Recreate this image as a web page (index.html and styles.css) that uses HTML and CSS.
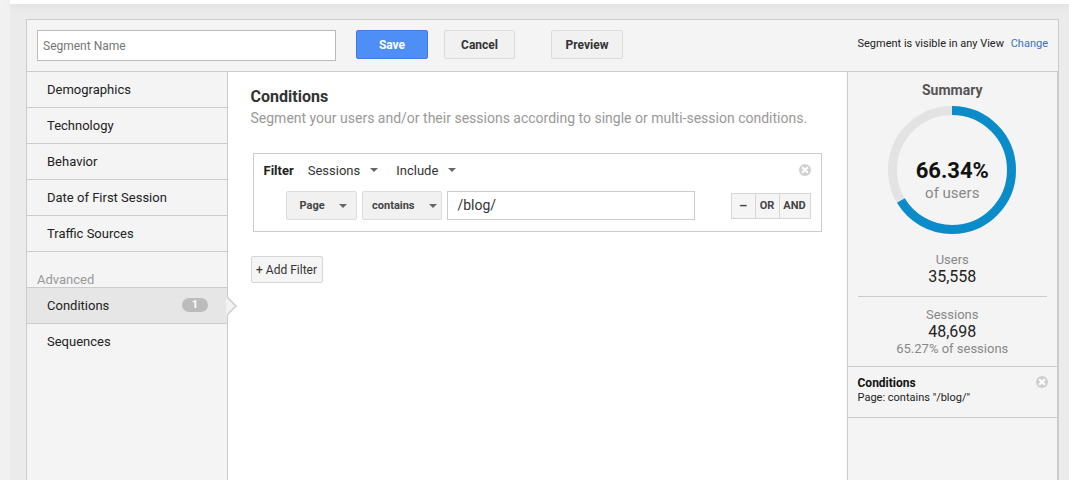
FILE: index.html
```html
<!DOCTYPE html>
<html>
<head>
<meta charset="utf-8">
<link rel="stylesheet" href="styles.css">
</head>
<body>
<div class="strip"></div>
<div class="stage">
  <div class="topbar"></div>
  <div class="panel">
    <div class="header">
      <input class="name" type="text" placeholder="Segment Name">
      <button class="btn save">Save</button>
      <button class="btn cancel">Cancel</button>
      <button class="btn preview">Preview</button>
      <div class="visible">Segment is visible in any View <a class="change">Change</a></div>
    </div>
    <div class="body">
      <nav class="nav">
        <div class="item">Demographics</div>
        <div class="item">Technology</div>
        <div class="item">Behavior</div>
        <div class="item">Date of First Session</div>
        <div class="item">Traffic Sources</div>
        <div class="adv">Advanced</div>
        <div class="item sel top">Conditions <span class="badge">1</span><span class="arrow"></span></div>
        <div class="item last">Sequences</div>
      </nav>
      <main class="content">
        <h1 class="title">Conditions</h1>
        <p class="sub">Segment your users and/or their sessions according to single or multi-session conditions.</p>
        <div class="filter">
          <div class="frow1">
            <span class="flabel">Filter</span>
            <span class="dd">Sessions <span class="caret"></span></span>
            <span class="dd">Include <span class="caret"></span></span>
            <span class="x fx"></span>
          </div>
          <div class="frow2">
            <span class="sbtn page">Page <span class="caret"></span></span>
            <span class="sbtn contains">contains <span class="caret"></span></span>
            <div class="val">/blog/</div>
            <div class="ops"><span class="op minus">&#8211;</span><span class="op">OR</span><span class="op">AND</span></div>
          </div>
        </div>
        <button class="addf">+ Add Filter</button>
      </main>
      <aside class="summary">
        <div class="stitle">Summary</div>
        <div class="donut">
          <svg width="130" height="130" viewBox="0 0 130 130">
            <circle cx="65" cy="65" r="59.5" fill="none" stroke="#e3e3e3" stroke-width="9"/>
            <circle cx="65" cy="65" r="59.5" fill="none" stroke="#0b8cca" stroke-width="9" stroke-dasharray="248 400" transform="rotate(-90 65 65)"/>
          </svg>
          <div class="dtext"><div class="pct">66.34%</div><div class="of">of users</div></div>
        </div>
        <div class="stat"><div class="lab">Users</div><div class="num">35,558</div></div>
        <div class="stat sess"><div class="lab">Sessions</div><div class="num">48,698</div><div class="lab">65.27% of sessions</div></div>
        <div class="cond">
          <div class="ctitle">Conditions</div>
          <div class="ctext">Page: contains "/blog/"</div>
          <span class="x cx"></span>
        </div>
      </aside>
    </div>
  </div>
</div>
</body>
</html>
```
FILE: styles.css
```css
* { box-sizing: border-box; }
html, body { margin: 0; height: 100%; overflow: hidden; }
body {
  display: flex;
  background: #f1f1f1;
  font-family: Roboto, "Liberation Sans", Arial, sans-serif;
  color: #222;
}
.strip { width: 10px; flex: none; }
.stage {
  flex: 1;
  background: #ebebeb;
  display: flex;
  flex-direction: column;
}
.topbar {
  height: 4px;
  background: #fff;
  box-shadow: 0 2px 8px rgba(0,0,0,0.08);
  margin-bottom: 15px;
}
.panel {
  margin-left: 16px;
  width: 1033px;
  flex: 1;
  border: 1px solid #ccc;
  border-bottom: 0;
  background: #f4f4f4;
  display: flex;
  flex-direction: column;
}
.header {
  height: 52px;
  border-bottom: 1px solid #ccc;
  display: flex;
  align-items: flex-start;
  padding: 10px 10px 0 10px;
}
.name {
  width: 299px;
  height: 31px;
  border: 1px solid #bbb;
  background: #fff;
  font: 12px Roboto, "Liberation Sans", sans-serif;
  padding: 0 5px;
  outline: none;
}
.name::placeholder { color: #777; }
.btn {
  height: 29px;
  font: bold 12px Roboto, "Liberation Sans", sans-serif;
  border-radius: 2px;
  padding: 0;
}
.save {
  width: 72px;
  margin-left: 20px;
  background: #4d8ff7;
  border: 1px solid #3b7de6;
  color: #fff;
}
.cancel {
  width: 71px;
  margin-left: 16px;
  background: #f1f1f1;
  border: 1px solid #dcdcdc;
  color: #333;
}
.preview {
  width: 72px;
  margin-left: 36px;
  background: #f1f1f1;
  border: 1px solid #dcdcdc;
  color: #333;
}
.visible {
  margin-left: auto;
  margin-top: 7px;
  font-size: 11px;
  color: #222;
}
.change { color: #3b73b9; margin-left: 4px; }

.body { flex: 1; display: flex; }
.nav {
  width: 201px;
  border-right: 1px solid #ccc;
  background: #f4f4f4;
}
.item {
  height: 36px;
  border-bottom: 1px solid #ccc;
  padding-left: 20px;
  font-size: 13px;
  line-height: 35px;
  color: #222;
  position: relative;
}
.item.last { border-bottom: 0; }
.item.top { border-top: 1px solid #ccc; }
.item.sel { background: #e6e6e6; height: 37px; }
.adv {
  margin-top: 20px;
  height: 15px;
  padding-left: 10px;
  font-size: 13px;
  color: #999;
  line-height: 15px;
}
.badge {
  position: absolute;
  left: 155px;
  top: 10px;
  width: 26px;
  height: 14px;
  border-radius: 7px;
  background: #bcbcbc;
  color: #fff;
  font-weight: bold;
  font-size: 11px;
  line-height: 14px;
  text-align: center;
}
.arrow {
  position: absolute;
  right: -10px;
  top: 8px;
  width: 0; height: 0;
  border-top: 10px solid transparent;
  border-bottom: 10px solid transparent;
  border-left: 10px solid #ccc;
}
.arrow::after {
  content: "";
  position: absolute;
  left: -11px;
  top: -9px;
  border-top: 9px solid transparent;
  border-bottom: 9px solid transparent;
  border-left: 9px solid #f2f2f2;
}

.content {
  width: 620px;
  background: #fff;
  border-right: 1px solid #ccc;
  padding: 16px 25px 0 23px;
}
.title {
  margin: 0;
  font-size: 16px;
  font-weight: bold;
  color: #333;
  line-height: 18px;
}
.sub {
  margin: 3px 0 0;
  font-size: 14px;
  color: #999;
  line-height: 18px;
}
.filter {
  margin: 26px 0 0 2px;
  width: 569px;
  height: 79px;
  border: 1px solid #ccc;
  padding: 0 10px 0 10px;
}
.frow1 {
  height: 32px;
  display: flex;
  align-items: center;
  font-size: 13px;
  position: relative;
}
.flabel { font-weight: bold; color: #222; margin-right: 14px; }
.dd { color: #333; margin-right: 18px; display: inline-flex; align-items: center; }
.caret {
  display: inline-block;
  width: 0; height: 0;
  border-left: 4px solid transparent;
  border-right: 4px solid transparent;
  border-top: 4px solid #666;
  margin-left: 10px;
}
.x {
  position: absolute;
  width: 12px; height: 12px;
  border-radius: 50%;
  background: #d0d0d0;
}
.x::before, .x::after {
  content: "";
  position: absolute;
  left: 5px; top: 2px;
  width: 2px; height: 8px;
  background: #fff;
  transform: rotate(45deg);
}
.x::after { transform: rotate(-45deg); }
.fx { right: 0; top: 10px; }
.frow2 {
  display: flex;
  align-items: center;
  padding-left: 22px;
  margin-top: 5px;
}
.sbtn {
  height: 29px;
  border: 1px solid #dcdcdc;
  background: #f1f1f1;
  font-size: 11px;
  font-weight: bold;
  color: #444;
  display: inline-flex;
  align-items: center;
  padding-left: 13px;
  border-radius: 2px;
}
.sbtn .caret { margin-left: 14px; }
.page { width: 72px; }
.contains { width: 81px; margin-left: 5px; padding-left: 9px; }
.val {
  width: 249px;
  height: 29px;
  margin-left: 5px;
  border: 1px solid #ccc;
  font-size: 14px;
  color: #333;
  line-height: 27px;
  padding-left: 9px;
}
.ops {
  margin-left: 36px;
  display: flex;
  height: 26px;
  border: 1px solid #d6d6d6;
  background: #f5f5f5;
}
.op {
  font-size: 11px;
  font-weight: bold;
  color: #444;
  line-height: 24px;
  text-align: center;
  width: 24px;
  border-left: 1px solid #d6d6d6;
}
.op.minus { border-left: 0; width: 23px; font-size: 13px; }
.op:last-child { width: 31px; }
.addf {
  margin-top: 24px;
  height: 27px;
  width: 72px;
  padding: 0;
  border: 1px solid #d6d6d6;
  background: #f5f5f5;
  border-radius: 2px;
  font: 12px Roboto, "Liberation Sans", sans-serif;
  color: #333;
}

.summary {
  width: 211px;
  background: #f4f4f4;
  border-right: 1px solid #ccc;
}
.stitle {
  text-align: center;
  font-weight: bold;
  font-size: 14px;
  color: #555;
  margin-top: 10px;
  line-height: 16px;
}
.donut {
  position: relative;
  width: 130px;
  height: 130px;
  margin: 7px auto 0;
}
.donut svg { display: block; }
.dtext {
  position: absolute;
  inset: 0;
  display: flex;
  flex-direction: column;
  align-items: center;
  justify-content: center;
  padding-top: 20px;
}
.pct { font-size: 22px; font-weight: bold; color: #111; line-height: 26px; }
.of { font-size: 15px; color: #888; line-height: 18px; }
.stat {
  text-align: center;
  margin: 17px 10px 0;
  padding-bottom: 10px;
  border-bottom: 1px solid #ccc;
}
.lab { font-size: 13px; color: #888; line-height: 15px; }
.num { font-size: 16px; color: #222; line-height: 19px; }
.sess { margin: 10px 0 0; padding-bottom: 10px; }
.cond {
  position: relative;
  height: 51px;
  border-bottom: 1px solid #ccc;
  padding: 9px 10px 0;
}
.ctitle { font-size: 12px; font-weight: bold; color: #111; line-height: 14px; }
.ctext { font-size: 11px; color: #222; line-height: 14px; margin-top: 1px; }
.cx { right: 9px; top: 9px; }
```
